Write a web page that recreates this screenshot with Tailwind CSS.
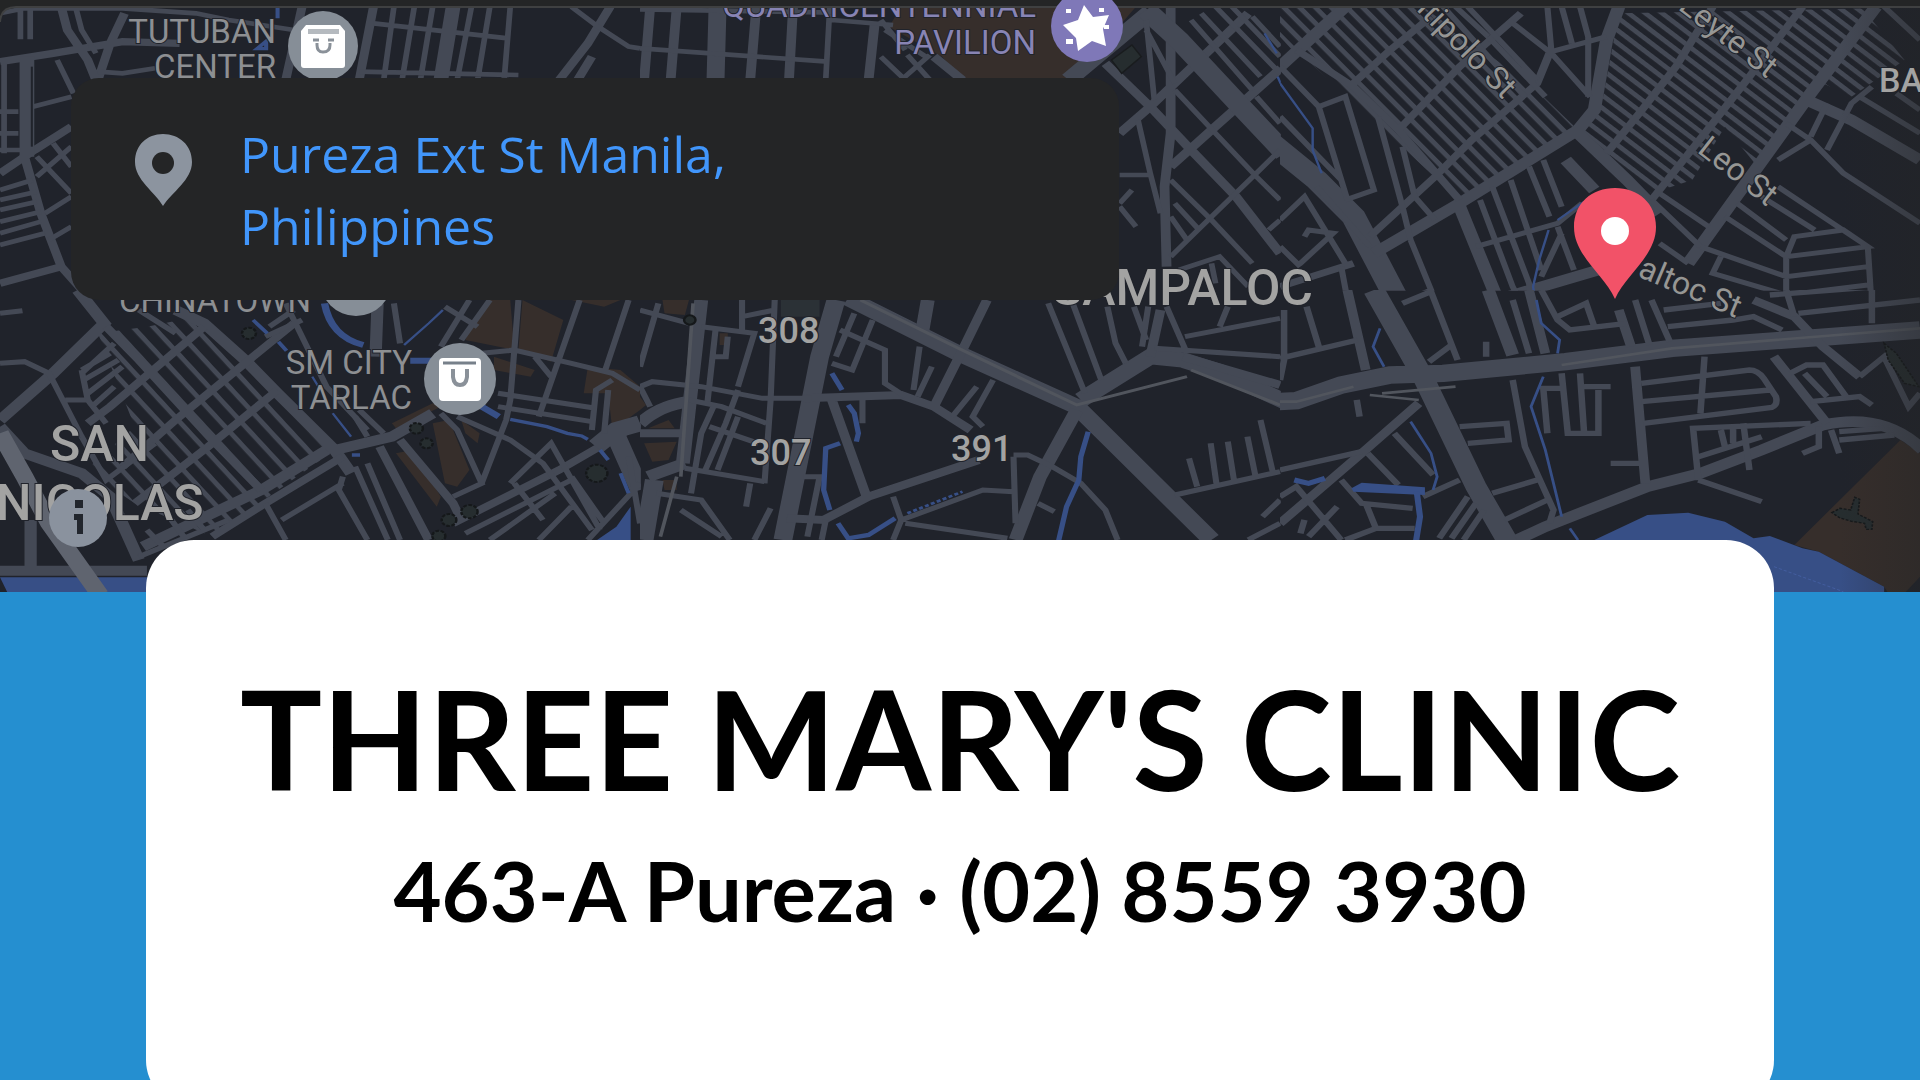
<!DOCTYPE html>
<html lang="en">
<head>
<meta charset="utf-8">
<meta name="viewport" content="width=device-width, initial-scale=1">
<title>Three Mary's Clinic</title>
<script src="https://cdn.jsdelivr.net/npm/@tailwindcss/browser@4"></script>
</head>
<body class="bg-[#258fd0]">
<main class="flex h-screen flex-col overflow-hidden bg-[#258fd0]">
  <section class="relative flex h-[592px] shrink-0 items-start overflow-hidden bg-[#242526] px-[71px] pt-[78px]" aria-label="Map">
    <svg class="absolute inset-0 h-full w-full" viewBox="0 0 1920 592" preserveAspectRatio="xMidYMid slice" fill="none">
      <defs>
        <pattern id="blocks-a" width="30" height="30" patternUnits="userSpaceOnUse" patternTransform="rotate(51)"><rect width="30" height="13" fill="#444955"/></pattern>
        <pattern id="blocks-b" width="28" height="28" patternUnits="userSpaceOnUse" patternTransform="rotate(43)"><rect width="28" height="13" fill="#444955"/></pattern>
        <pattern id="blocks-c" width="40" height="40" patternUnits="userSpaceOnUse" patternTransform="rotate(53)"><rect width="40" height="13" fill="#444955"/></pattern>
        <linearGradient id="edge"><stop stop-color="#242526" stop-opacity="0"/><stop offset="1" stop-color="#242526" stop-opacity=".4"/></linearGradient>
        <clipPath id="upper"><rect width="1570" height="872"/></clipPath>
        <clipPath id="lower"><rect width="1570" height="910"/></clipPath>
      </defs>
      <path d="M0 592V18Q2 6 16 6H1920V592Z" fill="#20232b"/>

      <!-- north west -->
      <g transform="scale(.4082 .3333)" stroke="#444955" stroke-width="14" clip-path="url(#upper)">
        <path stroke-width="22" d="M0 185L130 160 300 125 440 130M150 20L165 90 215 180 235 240M305 40L270 130 240 240M175 380L85 450 0 520M60 470L100 640 150 800 0 850M150 800L230 910M915 20L880 240M1495 20L1440 130 1370 240M1450 170L1415 240M740 20L700 240"/>
        <path d="M185 20L200 90 235 160M50 20V118M74 20V118M0 40L60 25H300L480 40 560 60 720 90M240 215L300 220 380 205M0 335H45M0 400H45M0 450H50M10 190V460M80 320L175 290M140 180L180 280M90 470L175 580M130 430L175 500M90 530L175 440"/>
        <path d="M0 570L80 540M0 600L90 575M0 630L90 605M0 665L100 635M0 700L100 665M0 735L110 700M110 640L175 590M120 720L175 680M965 20L940 240M1015 20L985 240M1060 20L1030 240M1155 20L1120 240M1200 20L1170 240M1250 20L1235 240M915 70L1245 115M880 215L1270 225M1400 20L1465 80 1540 140 1568 145"/>
        <path stroke-width="36" d="M66 170V470M1110 20L1080 240"/>
        <path stroke="#20232b" stroke-width="5" d="M78 200V440"/>
        <path stroke="#374f86" stroke-width="10" d="M680 22V55M630 146L652 124V146Z"/>
      </g>

      <!-- north -->
      <g transform="translate(640 0) scale(.4082 .3333)" stroke="#444955" stroke-width="14" clip-path="url(#upper)">
        <path d="M640 20H1215L1060 240H790L740 170 610 80Z" fill="#362e2b" stroke="none"/>
        <path stroke-width="24" d="M25 20L10 240M90 20L75 240M285 20L270 240M375 20L365 240M575 70L560 240M720 170L790 240M1300 20V400L1285 560 1290 800M1140 190L1250 320 1350 450 1460 590 1568 760M1175 400L1250 320 1370 180 1490 40M1300 500L1400 390 1510 270 1570 205"/>
        <path stroke-width="44" d="M190 20L185 240M1250 35L1050 240"/>
        <path stroke-width="54" d="M1240 30L1320 120 1480 330 1580 460"/>
        <path d="M465 20L455 240M0 145L460 185M0 28L480 38M470 60L620 75M590 60L650 150M590 170L650 240M655 165L710 240M710 165L640 240M600 90L700 170M1240 60L1260 300M1300 770L1400 650 1510 520 1568 450M1220 360L1250 520 1275 640M1175 525H1245M1175 620L1215 680M1175 610L1205 570M1310 270L1410 400 1510 530 1568 600M1300 540L1400 660 1500 790M1350 60L1500 270M1375 40L1520 230M1410 20L1568 220M1450 20L1568 170M1500 50L1568 140M1510 290L1568 370M1310 610L1370 690M1300 650L1340 720M1320 810L1420 770 1490 860M1400 790L1410 850M1568 660L1540 690M1240 90L1310 250"/>
        <path d="M1155 180L1205 135 1228 170 1180 220Z" fill="#262d2f" stroke="#191c1e" stroke-width="4"/>
        <path stroke="#374f86" stroke-width="6" d="M1530 100L1560 160M1562 230L1570 252"/>
      </g>

      <!-- north east -->
      <g transform="translate(1280 0) scale(.4082 .3333)" stroke="#444955" stroke-width="15" clip-path="url(#upper)">
        <path d="M40 150L165 20H350L620 260 730 390 440 600Z" fill="url(#blocks-a)" stroke="none"/>
        <path d="M0 20H150L30 150 0 110Z" fill="url(#blocks-a)" stroke="none"/>
        <path d="M830 40L1450 25 1170 500 1090 380 1010 540 910 580 740 390 790 300Z" fill="url(#blocks-b)" stroke="none"/>
        <path d="M1330 250L1450 60 1530 180 1400 290Z" fill="url(#blocks-b)" stroke="none"/>
        <path stroke-width="60" d="M-20 430L90 540 180 650 270 860 300 930"/>
        <path stroke-width="32" d="M0 200L80 110 165 15M230 760L440 610 730 390 770 330 800 120 830 20M1000 790L1100 620 1200 450 1300 280 1460 20M1290 300L1400 360 1568 480M730 400L850 540 930 640M700 480L770 570M440 620L540 920M530 900L780 810"/>
        <path stroke-width="20" d="M40 150L180 260 290 390 440 600M180 250L270 150 370 50M290 390L440 200 590 40M220 710L380 530 470 420 630 250 660 160M800 460L880 340 970 200 1060 20M910 600L1060 370 1150 230 1280 20M0 860L180 790"/>
        <path d="M460 20L630 240M510 110L650 290M560 60L665 160 760 290M430 20L510 110M400 20L600 290M655 20L665 155 800 110M690 20L715 130M735 20L755 110V290M1240 370L1300 420 1380 520 1568 670M1300 420L1220 480M1300 410L1340 310M1340 450L1400 310 1450 260M1420 290L1568 400M1510 280L1568 330M1480 20L1568 120"/>
        <path d="M910 600L1030 740M930 580L1050 680M930 730L1000 790M1090 650L1240 770 1440 740 1380 690 1260 710 1240 770V930M1120 610L1240 720M1220 560L1440 740 1450 930M1180 590L1310 690M1030 740L1240 830 1440 800M1080 770L1060 820 1240 885 1440 855"/>
        <path d="M490 600L570 860 600 930M520 560L610 850 620 930M565 540L640 810M610 500L660 650M645 480L690 620M480 740L680 670 740 610M680 680L720 810M690 700L640 830M320 720L390 930M160 600L230 570 160 290 95 320 165 600M0 200L95 320M240 350L300 620 320 720M300 440L330 590 380 660M0 350L150 540M0 660L60 590 160 790M90 560L220 740M50 790L130 700 70 690 60 710M0 740L50 800M150 800L170 930M300 905L370 870M820 880V930"/>
        <path stroke="#374f86" stroke-width="6" d="M0 250L80 385V450L102 520M745 605L680 660M658 690L635 780 620 860 628 930"/>
      </g>

      <!-- south west -->
      <g transform="translate(0 290) scale(.4082 .3333)" stroke="#444955" stroke-width="15" clip-path="url(#lower)">
        <path fill="#362e2b" stroke="none" d="M1150 110L1200 30H1250L1260 180 1140 150ZM1280 30L1380 90 1350 215 1270 180ZM1060 340L1080 350 970 415 960 400ZM1060 400L1100 390 1150 540 1120 590 1090 580ZM970 490L1010 480 1080 620 1070 650ZM1210 200L1310 240 1300 260 1210 240ZM1440 230L1520 240 1568 290V360L1500 420 1490 310 1430 310ZM1130 390L1175 430 1170 460 1140 430ZM1400 30H1520L1480 50Z"/>
        <path d="M360 110L480 80 820 480 520 740 330 640 210 540 330 410 240 130Z" fill="url(#blocks-c)" stroke="none"/>
        <path d="M0 862H370V912H20Z" fill="#374f86" stroke="none"/>
        <path d="M1545 650V752H1460L1510 710Z" fill="#374f86" stroke="none"/>
        <path stroke-width="30" d="M0 390L130 250 255 100 190 0M430 60L500 100 600 210 680 310 820 480 960 440 1060 370M820 480L860 550M350 770L640 600 800 480M0 410L60 490 200 550 270 620 340 810M75 690V840M0 842H360M920 200L925 40"/>
        <path stroke-width="22" d="M260 110L340 210 430 330 520 450 640 600M215 400L270 350 500 110M300 530L430 390 600 220 720 100M330 640L510 470 680 300M520 740L650 640 840 500M930 470L1050 750M980 450L1110 640 1130 690M1110 700L1370 540 1568 400"/>
        <path stroke-width="48" d="M1460 470L1510 420 1568 400M1510 440L1568 600"/>
        <path d="M0 220L60 215 120 250 200 440M0 70L55 62M160 330H215M200 240L215 330 260 400M200 240L270 190M205 270L290 210M215 310L300 230M225 350L280 290M200 440L260 570 380 460M340 800L560 690M650 640L700 750M690 690L840 580M840 560L830 600 900 750M870 530L950 750M900 520L980 750M900 440L870 380M940 430L880 360M360 720L400 770M420 690L450 740M460 660L500 720M280 160L200 250M340 60L430 130"/>
        <path d="M1110 620L1180 580 1120 420 1080 370M1180 580L1240 390 1250 330 1270 30M980 160L965 40M700 40L800 290 900 420M740 90L650 140M720 60L660 110M1080 170L1150 30M1130 150L1200 30M1180 190L1260 180 1400 220 1500 250 1568 300M1320 380L1420 30M1310 200L1350 260M1220 310L1460 355M1220 350L1450 395M1480 250L1540 30M1450 420L1460 300 1500 270M1480 430L1490 300M1140 730L1400 570M1200 750L1360 610M1120 380L1250 450 1330 520 1450 720M1250 580L1350 460 1470 720M1400 560L1480 700M1260 580L1330 690M1320 750L1400 650M1090 50L1170 110M1540 500L1568 700M1568 580L1440 750"/>
        <path stroke="#5f646f" stroke-width="44" d="M0 430L60 560 120 700 245 915"/>
        <path stroke="#374f86" stroke-width="18" d="M795 40Q810 140 890 165M1005 212H1060M1180 350L1222 380"/>
        <path stroke="#374f86" stroke-width="10" d="M1250 388L1300 400 1340 410 1390 430 1425 438 1440 448M620 90L655 130M682 155L702 182M1470 480L1490 510M1520 550L1540 610M862 495H882"/>
        <path stroke="#374f86" stroke-width="6" d="M990 165L1050 100 1085 60M815 370L860 440M765 260L780 290"/>
        <g fill="#262d2f" stroke="#15181a" stroke-width="6" stroke-dasharray="9 4"><circle cx="1020" cy="415" r="16"/><circle cx="1045" cy="460" r="15"/><circle cx="1100" cy="690" r="18"/><circle cx="1150" cy="665" r="20"/><circle cx="1075" cy="738" r="16"/><circle cx="1462" cy="550" r="26"/><circle cx="610" cy="130" r="17"/></g>
      </g>

      <!-- south -->
      <g transform="translate(640 290) scale(.4082 .3333)" stroke="#444955" stroke-width="15" clip-path="url(#lower)">
        <path fill="#362e2b" stroke="none" d="M55 30H120L110 75 60 70ZM10 460L90 455 70 510 30 515ZM20 415L70 390 85 415ZM55 570H90V600H60ZM0 320L15 345 0 360ZM195 130H215V165H195Z"/>
        <path stroke-width="46" d="M480 30L440 200 350 750M510 25L780 190 1070 350 1400 750M1080 330L1250 200 1330 210 1420 245 1580 335M10 750L35 570"/>
        <path stroke-width="34" d="M150 30L105 520M1070 360L980 560 920 750M705 30L692 120M0 400Q50 345 120 335M20 560L110 520"/>
        <path stroke-width="24" d="M1250 200L1275 60M850 30L790 180 720 350M400 325L640 315 720 350 810 420M470 330L555 620M360 685L450 690 560 620 830 510M0 430H110M1330 200L1568 285"/>
        <path d="M1000 40L1090 310M1060 40L1130 270M1145 50L1165 160 1190 220M1210 50L1240 150M1245 50L1230 170M1290 50L1340 190M1260 175L1568 200M1335 140L1568 85M1440 50L1420 110M685 170L670 300M715 230L680 320M865 270L815 380 840 410M825 290L765 380M420 325H300L150 290 30 275 0 290M490 120L600 180V280L650 320M570 90L520 240 470 220M525 70L480 200M545 330V400M250 30V120M330 30L320 330 305 580M250 80L330 60M150 110L280 130 240 290M185 120L165 340M215 140L210 200H180"/>
        <path d="M120 330L200 350 310 400M125 610L150 430 180 350M160 540L210 400 240 300M190 540L240 380M170 410L290 460M110 535L305 575M270 580L260 650M40 610L150 630 220 750M100 660L200 740M320 655L280 750M400 560H440L410 740M455 690L445 750M0 60L120 100M45 40L0 230M0 290L25 350M620 620L640 690 620 750M640 690L840 600 915 605M650 700L900 745M915 500L920 700M915 495H950L1010 530 1080 580 1140 660 1170 750M975 640L1015 665M1310 615L1568 545M1345 505L1365 590M1398 460L1412 580M1440 455L1455 570M1488 440L1508 560M1520 390L1550 545M1568 630L1525 680M1568 700L1490 750"/>
        <path stroke="#51555d" stroke-width="9" d="M540 30L780 175 1070 345 1340 260M90 560L50 740M130 40L100 560M1350 240L1568 345"/>
        <path stroke="#374f86" stroke-width="13" d="M470 250L495 300M510 345L525 370 535 430 530 455M490 460L455 475 450 600 465 660M485 700L510 745 560 735 625 685M1098 425L1080 500 1075 570 1045 650 1025 755"/>
        <path stroke="#374f86" stroke-width="8" stroke-dasharray="10 6" d="M655 670L790 605"/>
        <path d="M345 30H440V80H345Z" fill="#2b3136" stroke="none"/>
        <circle cx="122" cy="90" r="14" fill="#262d2f" stroke="#15181a" stroke-width="6"/>
      </g>

      <!-- south east -->
      <g transform="translate(1280 290) scale(.4082 .3333)" stroke="#444955" stroke-width="16" clip-path="url(#lower)">
        <path d="M1520 450L1568 490V860L1530 910H1490L1480 890 1320 785 1260 765Z" fill="#362e2b" stroke="none"/>
        <path d="M770 750L900 675 1000 668 1090 695 1160 745 1200 738 1280 775 1320 785 1480 890V912H770Z" fill="#374f86" stroke="none"/>
        <path stroke-width="52" d="M230 0L350 260 480 590 560 760M-10 335L40 332 150 285 270 255 400 250 700 215 960 175 1568 120"/>
        <path stroke-width="32" d="M510 0L570 195M580 750L650 710 900 590 1030 550 1180 480 1330 405Q1480 365 1575 480"/>
        <path stroke-width="24" d="M610 0L650 190M830 60L860 170M165 0L210 240M340 340L200 490 0 700M870 230L895 580M1160 30L1260 80 1330 170 1420 260M1210 200L1340 400"/>
        <path d="M570 30L610 190M870 30L905 165M910 30L955 155M640 0L680 90 710 120 850 100M680 80L750 40 770 110M940 60L1080 40M950 110L1110 90 1160 80 1230 120M1420 260L1480 200 1540 350 1568 310M1450 0V100M1200 15L1568 -20M1270 70L1568 30M1240 0L1260 80M65 50L95 170M0 205L190 150M10 60V210L0 270M300 40L370 5 435 210M365 215L420 165M505 155V200M188 330L195 380M0 540L200 485M215 490L290 585M280 430L375 555M150 570L200 640 325 655M210 640L235 715H330M235 715L160 750M0 620L40 590 150 750M70 740L140 650M50 730L60 690M350 620L440 570"/>
        <path d="M440 410L555 400 560 450 460 460M520 610L630 570M550 690L655 630M570 270L600 470 670 660 660 700M885 280L1150 240Q1170 240 1185 265L1215 320Q1220 345 1205 352L890 400M885 335L1200 300M1040 200L1030 370M810 520H880M690 250L705 430H780V300M735 250L745 430M655 430L645 295H690M745 290H810M1250 250L1290 225 1330 225 1390 325M1285 250L1340 320M1300 335L1420 320 1450 345M1025 570L1180 635M1025 570L1012 415 1300 400M1080 420L1090 470M1110 410V460M1135 400L1150 540M1025 500L1180 440M1370 425L1480 415M1370 450L1505 435M1320 410V470L1280 490M1350 420L1370 490M390 745L460 620M420 745L480 640M450 750L500 660"/>
        <path stroke="#51555d" stroke-width="8" d="M0 335H40L180 290M690 225L960 175 1568 115M220 315L340 330M250 310L430 290"/>
        <path stroke="#374f86" stroke-width="7" d="M245 115L228 170 255 230M320 395L370 490 385 560 375 600M628 30L640 100 685 150 680 190M645 260L615 350 650 480 690 680M710 715L730 750"/>
        <path d="M175 595L200 578 355 592V615L180 605Z" fill="#374f86" stroke="none"/>
        <path stroke="#374f86" stroke-width="15" d="M335 605L343 680 333 755M35 570L70 580 110 565"/>
        <path stroke="#435d9e" stroke-width="3" stroke-dasharray="8 5" d="M1210 830L1380 905"/>
        <path fill="#262d2f" stroke="#15181a" stroke-width="4" stroke-dasharray="7 4" d="M1352 668L1372 655 1398 660 1408 622 1420 628 1416 672 1452 695 1450 718 1436 718 1432 700 1400 694 1372 684ZM1480 160L1510 190 1565 290 1530 280 1490 210Z"/>
      </g>
      <rect x="1840" y="8" width="80" height="584" fill="url(#edge)"/>

      <!-- district and street labels -->
      <g font-family="Roboto, sans-serif" font-size="33" fill="#8d8f92" stroke="#20232b" stroke-width="2" paint-order="stroke">
        <text x="276" y="43" text-anchor="end">TUTUBAN</text>
        <text x="276" y="78" text-anchor="end">CENTER</text>
        <text x="311" y="312" text-anchor="end">CHINATOWN</text>
        <text x="412" y="374" text-anchor="end">SM CITY</text>
        <text x="412" y="409" text-anchor="end">TARLAC</text>
        <g fill="#8884b4"><text x="1036" y="17" text-anchor="end">QUADRICENTENNIAL</text><text x="1036" y="54" text-anchor="end">PAVILION</text></g>
        <g fill="#a3a3a2" font-size="50" font-weight="500"><text x="50" y="461">SAN</text><text x="-4" y="520">NICOLAS</text><text x="1313" y="305" text-anchor="end">SAMPALOC</text></g>
        <g fill="#a3a3a2" font-size="36" font-weight="500"><text x="758" y="343">308</text><text x="750" y="465">307</text><text x="951" y="461">391</text><text x="1879" y="92" font-size="34">BALIC</text></g>
        <g font-size="32" fill="#969694">
          <text transform="translate(1503 100) rotate(46)" text-anchor="end">Antipolo St</text>
          <text transform="translate(1767 79) rotate(38)" text-anchor="end">Leyte St</text>
          <text transform="translate(1767 207) rotate(38)" text-anchor="end">Leo St</text>
          <text transform="translate(1736 318) rotate(23)" text-anchor="end">altoc St</text>
        </g>
      </g>
      <path d="M0 0H1920V6H16Q2 7 0 20Z" fill="#242526"/>
      <path d="M0 22Q1 7 16 7H1920" stroke="#3f4041" stroke-width="2"/>

      <!-- place markers -->
      <circle cx="356" cy="280" r="36" fill="#868e97"/>
      <g id="mall-tutuban">
        <circle cx="323" cy="46" r="35" fill="#868e97"/>
        <path d="M306 25H340L345 31V65Q345 68 342 68H304Q301 68 301 65V31Z" fill="#fff"/>
        <path d="M308 29H339V34H308Z" fill="#b5babf"/>
        <path d="M317 43V45Q317 52 323 52 330 52 330 45V43M313 40H319M328 40H334" stroke="#8a9199" stroke-width="3"/>
      </g>
      <g id="mall-tarlac">
        <circle cx="460" cy="379" r="36" fill="#868e97"/>
        <rect x="439" y="358" width="42" height="43" rx="4" fill="#fff"/>
        <path d="M443 363H476" stroke="#77808a" stroke-width="3"/>
        <path d="M453 369V377Q454 385 460 385 466 385 467 377V369" stroke="#8a9199" stroke-width="4"/>
      </g>
      <g id="landmark">
        <circle cx="1087" cy="26" r="36" fill="#7f78b8"/>
        <path d="M1084 5L1093 17 1109 15 1103 29 1106 46 1092 41 1078 51 1076 38 1063 25 1078 20Z" fill="#fff"/>
        <path d="M1066 9h5v4h-5zM1099 8h5v4h-5zM1066 39h7v5h-7zM1104 25h5v4h-5z" fill="#fff"/>
      </g>
      <g id="info">
        <circle cx="78" cy="518" r="29" fill="#8a929e"/>
        <path d="M75 500h8v8h-8zM74 514h9v20h-6v-14h-3z" fill="#22262d"/>
      </g>
      <g id="destination">
        <path d="M1615 299C1604 274 1574 256 1574 227C1574 203 1592 188 1615 188S1656 203 1656 227C1656 256 1626 274 1615 299Z" fill="#f25268"/>
        <circle cx="1615" cy="231" r="14" fill="#fff"/>
      </g>
    </svg>

    <address class="relative flex min-h-[222px] w-[1048px] items-start gap-12 rounded-[28px] bg-[#242526] px-16 pt-10 not-italic">
      <svg class="mt-4 h-[72px] w-[57px] shrink-0" viewBox="0 0 57 72" fill="none" aria-hidden="true">
        <path d="M28 72C20 58 0 46 0 28C0 11 12 0 28 0S57 11 57 28C57 46 37 58 28 72Z" fill="#8c949f"/>
        <circle cx="28" cy="29" r="11" fill="#242526"/>
      </svg>
      <a href="#map" class="max-w-[560px] font-['Open_Sans',sans-serif] text-[50px] leading-[72px] text-[#4196fb]">Pureza Ext St Manila, Philippines</a>
    </address>
  </section>

  <section class="relative mx-[146px] -mt-[52px] flex h-[568px] shrink-0 flex-col items-center rounded-[48px] bg-white pt-28 text-center font-['Lato',sans-serif] font-bold text-black">
    <h1 class="text-[137px] leading-[172px] whitespace-nowrap">THREE MARY'S CLINIC</h1>
    <p class="text-[83px] leading-[132px] whitespace-nowrap">463-A Pureza · (02) 8559 3930</p>
  </section>
</main>
</body>
</html>
